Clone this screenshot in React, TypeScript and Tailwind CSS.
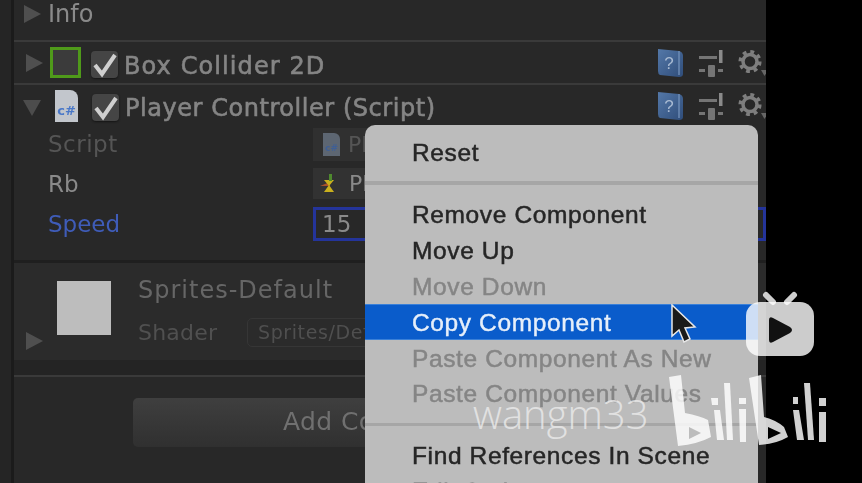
import React from "react";

const Tri = ({ down = false, className = "" }: { down?: boolean; className?: string }) => (
  <svg width="18" height="20" viewBox="0 0 18 20" className={className}>
    {down ? <polygon points="0,4 18,4 9,20" fill="#4c4c4c" /> : <polygon points="1,1 18,10 1,19" fill="#4f4f4f" />}
  </svg>
);

const Check = () => (
  <div className="mt-[3px] w-[27px] h-[27px] rounded-[4px] bg-[#454545] shadow-[0_1px_2px_#151515] flex items-center justify-center">
    <svg width="27" height="27" viewBox="0 0 27 27">
      <path d="M4 14 L11 23 L24 4" fill="none" stroke="#cfcfcf" strokeWidth="4" />
    </svg>
  </div>
);

const CsIcon = ({ small = false }: { small?: boolean }) => (
  <div
    className={
      small
        ? "w-[17px] h-[23px] bg-[#5d6672] rounded-tr-[6px] flex items-end justify-center text-[#3f5f95] text-[9px] font-bold leading-[16px]"
        : "w-[23px] h-[32px] bg-[#c2c6cc] rounded-tr-[8px] flex items-end justify-center text-[#4a78c8] text-[13px] font-bold leading-[22px]"
    }
  >
    c#
  </div>
);

const HeaderTools = () => (
  <div className="flex items-center ml-auto gap-[15px]">
    <svg width="27" height="30" viewBox="0 0 27 30">
      <defs>
        <linearGradient id="bk" x1="0" y1="0" x2="1" y2="1">
          <stop offset="0" stopColor="#5478a8" />
          <stop offset="1" stopColor="#2f4d7a" />
        </linearGradient>
      </defs>
      <path d="M1 1 L22 3 Q26 4 26 8 L26 26 Q26 29 22 29 L3 27 Q1 26 1 23 Z" fill="url(#bk)" />
      <path d="M22 3 L22 27" stroke="#6d8bb4" strokeWidth="1.5" />
      <text x="12" y="21" fontSize="17" fill="#a8bad2" textAnchor="middle" fontFamily="Liberation Sans, sans-serif">?</text>
    </svg>
    <svg width="24" height="28" viewBox="0 0 24 28">
      <rect x="0" y="7" width="18" height="3" fill="#757575" />
      <rect x="20" y="1" width="3.5" height="13" fill="#8a8a8a" />
      <rect x="0" y="20" width="6" height="3" fill="#757575" />
      <rect x="9" y="16" width="7" height="12" rx="1" fill="#757575" />
      <rect x="19" y="20" width="5" height="3" fill="#757575" />
    </svg>
    <div className="w-[28px] h-[30px] overflow-hidden">
      <svg width="32" height="30" viewBox="0 0 32 30">
        <circle cx="12" cy="13.5" r="7" fill="none" stroke="#7e7e7e" strokeWidth="3.5" />
        <circle cx="12" cy="13.5" r="9.8" fill="none" stroke="#7e7e7e" strokeWidth="3.5" strokeDasharray="3.8 3.9" />
        <polygon points="23,22 30,22 26.5,28" fill="#666" />
      </svg>
    </div>
  </div>
);

const Prop = ({ label, color, h, children }: { label: string; color: string; h: string; children: React.ReactNode }) => (
  <div className={`flex items-center pl-[34px] ${h}`}>
    <div className={`w-[265px] shrink-0 text-[23px] leading-none ${color}`}>{label}</div>
    {children}
  </div>
);

const MenuItem = ({ label, tone = "text-[#262626]", shift = "pt-[2px]" }: { label: string; tone?: string; shift?: string }) => (
  <div className={`h-[36px] shrink-0 flex items-center pl-[47px] text-[24.5px] leading-none tracking-[0.62px] [-webkit-text-stroke:0.5px] ${shift} ${tone}`}>{label}</div>
);

export default function App() {
  return (
    <div
      className="relative w-[862px] h-[483px] overflow-hidden bg-black flex"
      style={{ fontFamily: '"DejaVu Sans", sans-serif' }}
    >
      <div className="w-[766px] h-full bg-[#282828] flex blur-[0.6px]">
        <div className="w-[14px] shrink-0 bg-[#252525] border-r-[3px] border-[#1b1b1b]" />
        <div className="flex-1 min-w-0 flex flex-col">
          {/* Info */}
          <div className="h-[42px] shrink-0 border-b-[2px] border-[#3a3a3a] pl-[9px] pb-[12px] flex items-center gap-[7px]">
            <Tri />
            <span className="text-[24px] leading-none text-[#8a8a8a]">Info</span>
          </div>
          {/* Box Collider */}
          <div className="h-[43px] shrink-0 border-b-[2px] border-[#3a3a3a] pl-[11px] flex items-center">
            <Tri />
            <div className="w-[31px] h-[31px] ml-[7px] border-[3px] border-[#4f9a1a] bg-[#3b3b3b]" />
            <div className="ml-[10px]"><Check /></div>
            <span className="ml-[6px] mt-[6px] text-[24px] leading-none text-[#858585] tracking-[1.1px] [-webkit-text-stroke:0.6px]">Box Collider 2D</span>
            <HeaderTools />
          </div>
          {/* Player Controller */}
          <div className="h-[41px] shrink-0 pl-[9px] flex items-center">
            <Tri down />
            <div className="ml-[14px]"><CsIcon /></div>
            <div className="ml-[14px]"><Check /></div>
            <span className="ml-[6px] mt-[4px] text-[24px] leading-none text-[#858585] tracking-[0.55px] [-webkit-text-stroke:0.6px]">Player Controller (Script)</span>
            <HeaderTools />
          </div>
          {/* Props */}
          <Prop label="Script" color="text-[#555555] tracking-[0.5px]" h="h-[37px]">
            <div className="h-[33px] w-[60px] bg-[#303030] flex items-center pl-[10px] gap-[8px]">
              <CsIcon small />
              <span className="text-[22px] text-[#555555] leading-none">Pl</span>
            </div>
          </Prop>
          <Prop label="Rb" color="text-[#8a8a8a] pt-[2px]" h="h-[41px]">
            <div className="h-[31px] w-[60px] bg-[#323232] flex items-center pl-[7px] gap-[9px]">
              <svg width="20" height="20" viewBox="0 0 20 20">
                <polygon points="0,12 10,8 10,12" fill="#a8502a" />
                <polygon points="4,6 14,6 9,12" fill="#c9b01e" />
                <polygon points="4,18 14,18 9,11" fill="#c9b01e" />
                <rect x="9" y="0" width="3" height="7" fill="#4f8a2e" />
              </svg>
              <span className="text-[22px] text-[#8a8a8a] leading-none">Pl</span>
            </div>
          </Prop>
          <Prop label="Speed" color="text-[#3f5cb8]" h="h-[40px]">
            <div className="h-[34px] w-[454px] border-[3px] border-[#24349a] flex items-center pl-[6px] text-[23px] leading-none text-[#8a8a8a]">15</div>
          </Prop>
          {/* Material */}
          <div className="mt-[16px] h-[100px] shrink-0 border-t-[3px] border-[#1f1f1f] bg-[#2b2b2b] relative pl-[43px] flex">
            <div className="mt-[18px] w-[54px] h-[54px] bg-[#bdbdbd]" />
            <div className="absolute left-[11px] top-[68px]"><Tri /></div>
            <div className="ml-[27px] mt-[13px] flex flex-col">
              <span className="text-[24px] leading-[28px] text-[#666666] tracking-[1px] whitespace-nowrap">Sprites-Default</span>
              <div className="flex items-center mt-[14px]">
                <span className="text-[22px] leading-none text-[#505050] w-[109px] tracking-[0.2px]">Shader</span>
                <div className="w-[200px] h-[29px] border border-[#363636] rounded-[5px] pl-[10px] text-[19px] leading-[27px] text-[#4f4f4f] tracking-[0.6px] whitespace-nowrap">Sprites/Default</div>
              </div>
            </div>
          </div>
          <div className="h-[17px] shrink-0 bg-[#242424] border-b-[2px] border-[#3a3a3a]" />
          {/* Add Component */}
          <div className="pl-[119px] pt-[21px]">
            <div className="h-[49px] w-[590px] rounded-[5px] bg-gradient-to-b from-[#3f3f3f] to-[#303030] pl-[150px] pb-[3px] flex items-center text-[25px] leading-none text-[#707070] tracking-[0.4px]">
              Add Component
            </div>
          </div>
        </div>
      </div>

      {/* Context menu */}
      <div
        className="absolute left-[365px] top-[125px] w-[393px] h-[380px] bg-[#bcbcbc] rounded-[10px] flex flex-col pt-[10px] blur-[0.6px]"
        style={{ fontFamily: '"Liberation Sans", sans-serif' }}
      >
        <MenuItem label="Reset" shift="pt-0" />
        <div className="h-[4px] shrink-0 mt-[10px] mb-[11px] bg-[#a6a6a6]" />
        <MenuItem label="Remove Component" />
        <MenuItem label="Move Up" />
        <MenuItem label="Move Down" tone="text-[#858585]" />
        <div className="h-[36px] shrink-0 flex items-center pl-[47px] pt-[2px] bg-[#0a5ccb] border-y border-[#3a80d8] text-[24.5px] leading-none tracking-[0.62px] [-webkit-text-stroke:0.4px] text-[#e6effa]">Copy Component</div>
        <MenuItem label="Paste Component As New" tone="text-[#858585]" />
        <MenuItem label="Paste Component Values" tone="text-[#858585]" shift="pt-0" />
        <div className="h-[3px] shrink-0 mt-[11px] mb-[12px] bg-[#a6a6a6]" />
        <MenuItem label="Find References In Scene" shift="pt-0" />
        <MenuItem label="Edit Script" shift="pt-0" />
      </div>

      {/* Cursor */}
      <svg className="absolute left-[670px] top-[304px]" width="28" height="40" viewBox="0 0 28 40">
        <path d="M2 1 L2 32 L9 26 L14 38 L20 35 L15 24 L25 23 Z" fill="#1a1a1a" stroke="#e8e8e8" strokeWidth="1.5" />
      </svg>

      {/* Bilibili watermark */}
      <svg className="absolute left-[745px] top-[290px]" width="70" height="68" viewBox="0 0 70 68">
        <path d="M21 5 L28 12 M49 5 L42 12" stroke="#cfcfcf" strokeWidth="6" strokeLinecap="round" />
        <rect x="1" y="12" width="68" height="54" rx="14" fill="#ffffff" fillOpacity="0.8" />
        <path d="M24 30 Q24 26 28 28 L45 37 Q49 40 45 43 L28 52 Q24 54 24 50 Z" fill="#111" />
      </svg>
      <div
        className="absolute left-[473px] top-[394px] text-[40px] leading-none text-[#ececec]/80"
        style={{ fontFamily: '"Open Sans", sans-serif', fontWeight: 300 }}
      >
        wangm33
      </div>
      <svg className="absolute left-[668px] top-[374px]" width="162" height="74" viewBox="0 0 162 74">
        <g fill="#ffffff" fillOpacity="0.82">
          <path d="M1 3 L13 1 L17 39 Q32 42 40 46 L43 63 Q30 70 10 72 Z M21 53 L21 65 L33 59 Z" fillRule="evenodd" />
          <path d="M43 24 L50 24 L50 31 L44 31 Z M46 36 L52 36 L56 66 L49 66 Z" />
          <path d="M56 9 L62 9 L65 66 L59 66 Z" />
          <path d="M71 24 L78 24 L78 30 L71 30 Z M71 35 L78 35 L78 68 L72 68 Z" />
          <path d="M81 4 L93 1 L96 43 Q108 46 116 53 L120 63 Q108 70 91 71 Z M100 53 L100 65 L113 59 Z" fillRule="evenodd" />
          <path d="M125 23 L130 23 L130 30 L125 30 Z M125 36 L131 36 L136 66 L129 66 Z" />
          <path d="M136 9 L142 9 L146 66 L140 66 Z" />
          <path d="M151 24 L158 24 L158 32 L151 32 Z M151 38 L158 38 L158 68 L151 68 Z" />
        </g>
      </svg>
    </div>
  );
}
